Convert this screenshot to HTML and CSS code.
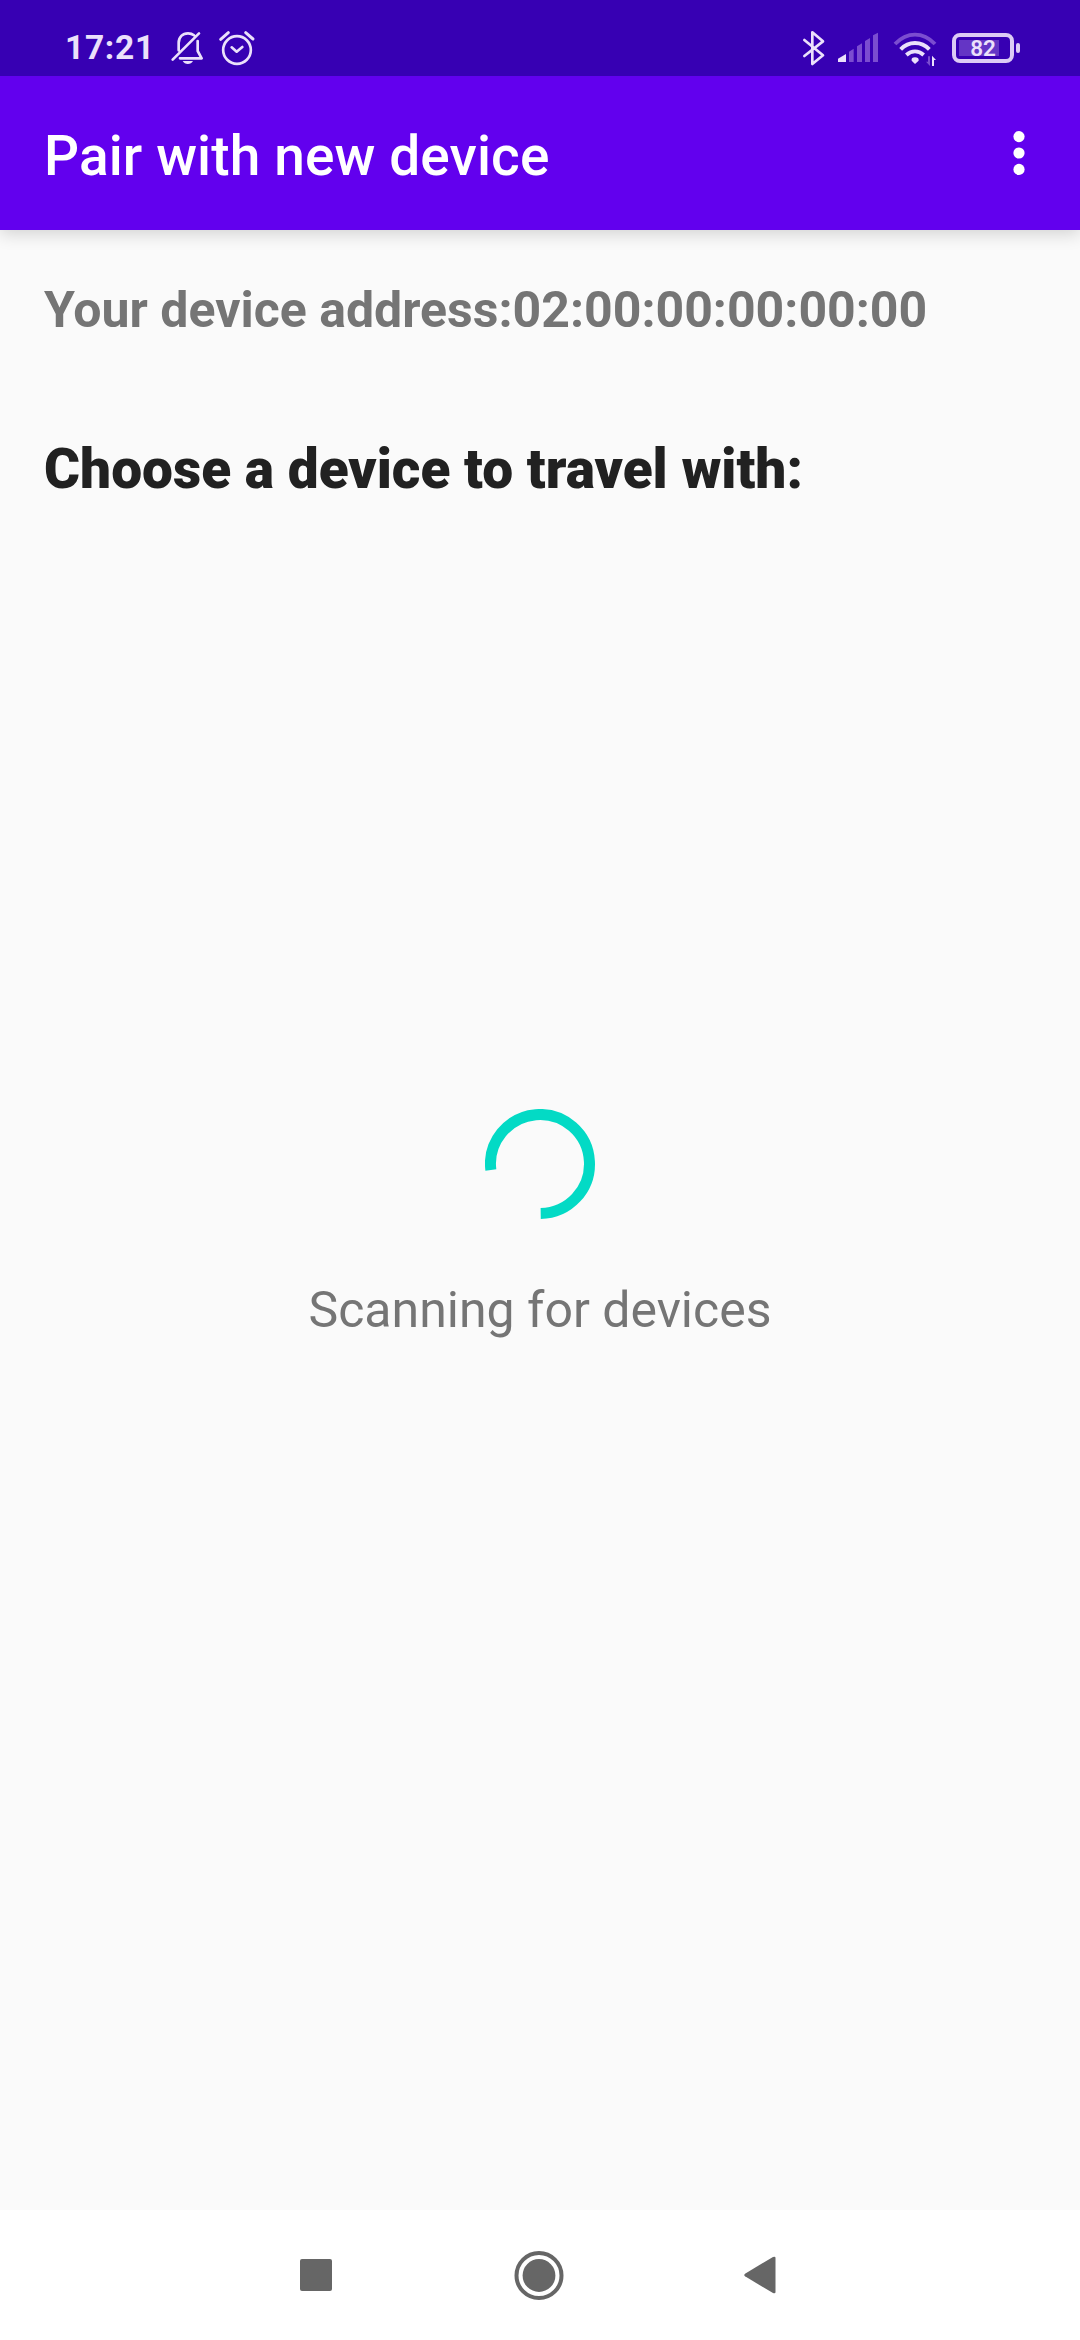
FILE: index.html
```html
<!DOCTYPE html>
<html lang="en">
<head>
<meta charset="utf-8">
<title>Pair with new device</title>
<link rel="stylesheet" href="styles.css">
</head>
<body>
<div class="screen">
  <header class="status-bar">
    <span class="clock">17:21</span>
    <svg class="icon-bell" width="34" height="38" viewBox="360 42 102 114" fill="none" stroke="#ebe0fb" stroke-width="8" stroke-linecap="round" stroke-linejoin="round">
      <path d="M368 134L447 55M386 106V84C386 66 398 55 414 55C421 55 427 57 432 61M443 78V108L455 130H390"/>
      <path d="M398 138H429Q424 147 413.500 147Q403 147 398 138Z" fill="#ebe0fb" stroke="none"/>
    </svg>
    <svg class="icon-alarm" width="38" height="38" viewBox="504 42 114 114" fill="none" stroke="#ebe0fb" stroke-width="8" stroke-linecap="round" stroke-linejoin="round">
      <circle cx="561" cy="105" r="41.500"/>
      <path d="M545 97L560 110L577 96"/>
      <path d="M512 73L535 53M587 53L609 72" stroke-width="9"/>
    </svg>
    <div class="status-right">
      <svg width="24" height="38" viewBox="36 42 72 114" fill="none" stroke="#ebe0fb" stroke-width="8" stroke-linecap="round" stroke-linejoin="round">
        <path d="M43 75L99 121L67 147V52L99 79L43 123"/>
      </svg>
      <svg class="icon-signal" width="42" height="38" viewBox="141 42 126 114" fill="#7b4dd0">
        <path d="M144 141V131L168 117V141Z" fill="#ebe0fb"/>
        <path d="M177 141V110L191 101V141ZM201 141V94L216 85V141ZM225 141V78L240 69V141ZM249 141V61L264 53V141Z"/>
      </svg>
      <svg class="icon-wifi" width="44" height="38" viewBox="309 42 132 114" fill="none" stroke="#ebe0fb" stroke-width="11.500">
        <path d="M315 87Q342 59 375 59Q408 59 435 87" stroke="#7b4dd0"/>
        <path d="M332 103Q350 84 375 84Q400 84 418 103M349 120Q361 109 375 109Q389 109 401 120"/>
        <path d="M375 147L365 137Q363 127 375 127Q387 127 386 137Z" fill="#ebe0fb" stroke="none"/>
        <path d="M420 124V153L408 140H414V124Z" fill="#7b4dd0" stroke="none"/>
        <path d="M426 153V122L438 135H432V153Z" fill="#ebe0fb" stroke="none"/>
      </svg>
      <div class="battery">
        <div class="battery-body"><span class="battery-level"></span><span class="battery-text">82</span></div>
        <span class="battery-tip"></span>
      </div>
    </div>
  </header>

  <div class="app-bar">
    <h1 class="title">Pair with new device</h1>
    <svg width="12" height="44" viewBox="0 0 12 44" fill="#fff">
      <circle cx="6" cy="5.600" r="5.600"/><circle cx="6" cy="22" r="5.600"/><circle cx="6" cy="38.400" r="5.600"/>
    </svg>
  </div>

  <main class="content">
    <p class="address">Your device address:02:00:00:00:00:00</p>
    <h2 class="prompt">Choose a device to travel with:</h2>
    <div class="scanning">
      <svg width="110" height="110" viewBox="-55 -55 110 110" fill="none" stroke="#03dac5" stroke-width="11">
        <path d="M-49.150 6A49.500 49.500 0 1 1 .7 49.490"/>
      </svg>
      <p class="scanning-text">Scanning for devices</p>
    </div>
  </main>

  <nav class="nav-bar">
    <svg width="32" height="32" viewBox="0 0 32 32" fill="#666"><rect width="32" height="32" rx="2"/></svg>
    <svg class="nav-home" width="50" height="50" viewBox="0 0 50 50"><circle cx="25" cy="25.500" r="22.500" fill="none" stroke="#666" stroke-width="4"/><circle cx="25" cy="25.500" r="16.400" fill="#666"/></svg>
    <svg class="nav-back" width="32" height="38" viewBox="0 0 32 38" fill="#666"><path d="M1 17.700L29 1Q31.500 0 31.500 2V36Q31.500 38 29 37L1 20.300Q-.5 19 1 17.700Z"/></svg>
  </nav>
</div>
</body>
</html>
```
FILE: styles.css
```css
* { box-sizing: border-box; margin: 0; padding: 0; }

body {
  width: 1080px;
  height: 2340px;
  overflow: hidden;
  font-family: Roboto, "Noto Sans", sans-serif;
  background: #fafafa;
}

svg { display: block; flex: none; }

.screen {
  display: flex;
  flex-direction: column;
  height: 2340px;
}

.status-bar {
  position: relative;
  z-index: 1;
  display: flex;
  align-items: center;
  height: 76px;
  padding: 20px 60px 0 65px;
  background: #3700b3;
  color: #ebe0fb;
}

.clock {
  width: 105px;
  font-size: 33.5px;
  font-weight: 700;
  line-height: 38px;
  letter-spacing: 0.7px;
}

.icon-alarm { margin-left: 14px; }

.status-right {
  display: flex;
  align-items: center;
  height: 38px;
  margin-left: auto;
}

.icon-signal { margin-left: 11px; }
.icon-wifi { margin-left: 14px; }

.battery {
  display: flex;
  align-items: center;
  gap: 2px;
  margin-left: 15px;
}

.battery-body {
  display: grid;
  align-items: center;
  width: 62px;
  height: 30px;
  padding: 0 3px;
  border: 4px solid #dccbf5;
  border-radius: 8px;
}

.battery-level,
.battery-text { grid-area: 1 / 1; }

.battery-level {
  width: 40px;
  height: 16px;
  background: #6435c5;
}

.battery-text {
  padding-top: 1px;
  font-size: 22.5px;
  font-weight: 600;
  line-height: 21px;
  text-align: center;
}

.battery-tip {
  width: 4px;
  height: 10px;
  border-radius: 2px;
  background: #dccbf5;
}

.app-bar {
  display: flex;
  align-items: center;
  justify-content: space-between;
  height: 154px;
  padding: 0 55px 0 44px;
  background: #6200ee;
  color: #fff;
  box-shadow: 0 4px 16px rgba(0, 0, 0, 0.16);
}

.title {
  padding-top: 6px;
  font-size: 55px;
  font-weight: 500;
  line-height: 64px;
  letter-spacing: 0.12px;
}

.content {
  display: flex;
  flex: 1;
  flex-direction: column;
  padding: 51px 44px 0;
}

.address {
  font-size: 50px;
  font-weight: 700;
  line-height: 58px;
  color: #757575;
}

.prompt {
  margin-top: 98px;
  font-size: 55px;
  font-weight: 900;
  line-height: 64px;
  color: #212121;
}

.scanning {
  display: flex;
  flex-direction: column;
  align-items: center;
  margin-top: 608px;
}

.scanning-text {
  margin-top: 62px;
  font-size: 50px;
  line-height: 58px;
  color: #757575;
}

.nav-bar {
  display: flex;
  align-items: center;
  height: 130px;
  padding-left: 300px;
  background: #fff;
}

.nav-home { margin-left: 182px; }
.nav-back { margin-left: 180px; }
```
